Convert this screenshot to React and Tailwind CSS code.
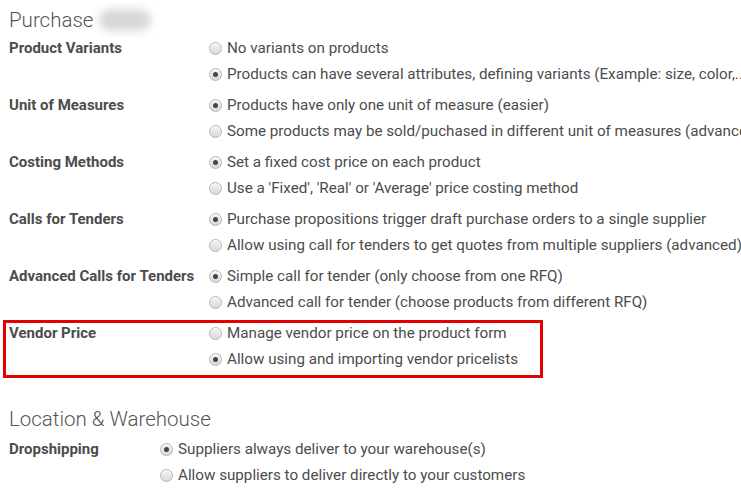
import React from "react";

const Radio = ({ checked }) => (
  <span className="relative inline-block w-[13px] h-[13px] rounded-full border border-[#b5b5b5] bg-gradient-to-b from-[#f4f4f4] to-[#d9d9d9] shrink-0 shadow-[inset_0_1px_1px_rgba(255,255,255,0.8)]">
    {checked && (
      <span className="absolute left-[3px] top-[3px] w-[5px] h-[5px] rounded-full bg-[#444]" />
    )}
  </span>
);

const Group = ({ label, options, labelW, extra = "" }) => (
  <div className={`flex mb-[5px] ${extra}`}>
    <div className={`${labelW} shrink-0 font-bold text-[15px] leading-[26px] text-[#4c4c4c]`}>{label}</div>
    <div className="flex flex-col">
      {options.map((o, i) => (
        <div key={i} className="flex items-center gap-[5px] h-[26px] whitespace-nowrap">
          <Radio checked={o.c} />
          <span className="text-[15.2px] text-[#4c4c4c]">{o.t}</span>
        </div>
      ))}
    </div>
  </div>
);

const purchase = [
  { label: "Product Variants", options: [{ t: "No variants on products" }, { t: "Products can have several attributes, defining variants (Example: size, color,...)", c: true }] },
  { label: "Unit of Measures", options: [{ t: "Products have only one unit of measure (easier)", c: true }, { t: "Some products may be sold/puchased in different unit of measures (advanced)" }] },
  { label: "Costing Methods", options: [{ t: "Set a fixed cost price on each product", c: true }, { t: "Use a 'Fixed', 'Real' or 'Average' price costing method" }] },
  { label: "Calls for Tenders", options: [{ t: "Purchase propositions trigger draft purchase orders to a single supplier", c: true }, { t: "Allow using call for tenders to get quotes from multiple suppliers (advanced)" }] },
  { label: "Advanced Calls for Tenders", options: [{ t: "Simple call for tender (only choose from one RFQ)", c: true }, { t: "Advanced call for tender (choose products from different RFQ)" }] },
];

export default function App() {
  return (
    <div className="w-[741px] h-[489px] overflow-hidden bg-white pl-[9px] pt-[5px]" style={{ fontFamily: "Roboto, 'Liberation Sans', sans-serif" }}>
      <div className="flex items-center h-[30px]">
        <span className="text-[20.5px] font-light text-[#555]">Purchase</span>
        <span className="ml-[6px] w-[52px] h-[22px] rounded-full bg-[#d8d8d8] blur-[4px]" />
      </div>
      {purchase.map((g, i) => (
        <Group key={i} {...g} labelW="w-[200px]" />
      ))}
      <div className="-ml-[6px] w-[540px] h-[58px] border-[3px] border-[#e30000] pl-[3px]">
        <Group label="Vendor Price" labelW="w-[200px]" extra="-mt-[3px]" options={[{ t: "Manage vendor price on the product form" }, { t: "Allow using and importing vendor pricelists", c: true }]} />
      </div>
      <div className="flex items-center h-[30px] mt-[26px] mb-[2px]">
        <span className="text-[20.5px] font-light text-[#555]">Location &amp; Warehouse</span>
      </div>
      <Group label="Dropshipping" labelW="w-[151px]" options={[{ t: "Suppliers always deliver to your warehouse(s)", c: true }, { t: "Allow suppliers to deliver directly to your customers" }]} />
    </div>
  );
}
